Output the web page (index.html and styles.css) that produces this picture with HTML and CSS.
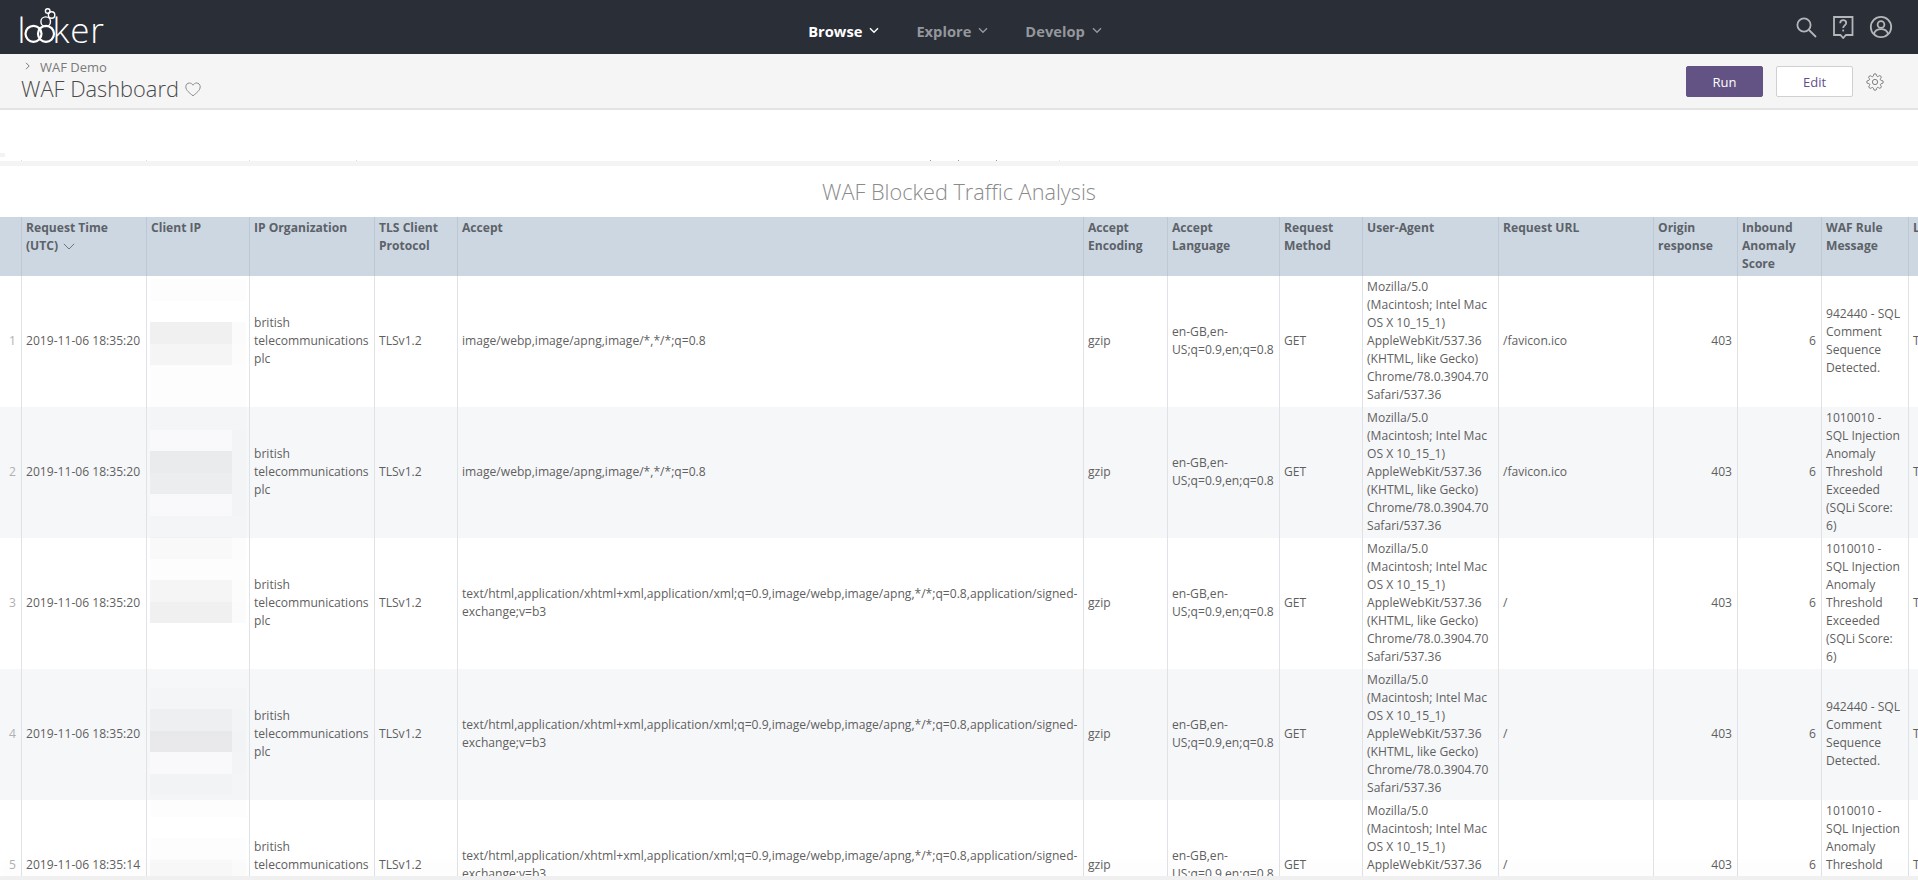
FILE: index.html
```html
<!DOCTYPE html>
<html lang="en">
<head>
<meta charset="utf-8">
<title>WAF Dashboard</title>
<link rel="stylesheet" href="styles.css">
</head>
<body>
<header class="topnav">
  <div class="logo">
    <svg width="100" height="54" viewBox="0 0 100 54" class="logo-svg">
      <text class="logo-text" x="-3.500" y="43">l</text>
      <circle class="logo-ring" cx="12.500" cy="33.800" r="8"/>
      <circle class="logo-ring" cx="25" cy="33.800" r="8"/>
      <text class="logo-text spaced" x="31.500" y="43">ker</text>
      <circle class="logo-ring thin" cx="24.700" cy="21.700" r="4.800"/>
      <circle class="logo-ring thin" cx="30.600" cy="15" r="3.200"/>
      <circle class="logo-ring thin" cx="26.700" cy="11" r="2.300"/>
    </svg>
  </div>
  <nav class="menu">
    <a class="menu-item active">Browse <svg class="chev" width="10" height="7" viewBox="0 0 10 7"><path d="M1 1.2l4 4 4-4"/></svg></a>
    <a class="menu-item">Explore <svg class="chev" width="10" height="7" viewBox="0 0 10 7"><path d="M1 1.2l4 4 4-4"/></svg></a>
    <a class="menu-item">Develop <svg class="chev" width="10" height="7" viewBox="0 0 10 7"><path d="M1 1.2l4 4 4-4"/></svg></a>
  </nav>
  <div class="tools">
    <svg class="tool" width="22" height="22" viewBox="0 0 22 22"><circle cx="9" cy="9" r="6.600"/><path d="M14 14l7 7"/></svg>
    <svg class="tool" width="22" height="24" viewBox="0 0 22 24"><path d="M2 2h18.500v18h-6.500l-2.800 3-2.800-3H2z"/><path d="M8.200 8.200c0-2 1.300-3 3-3s3 1.100 3 2.800c0 2.400-3 2.400-3 4.900"/><path d="M11.200 14.600v1.800"/></svg>
    <svg class="tool" width="24" height="24" viewBox="0 0 24 24"><circle cx="12" cy="12" r="10.200"/><circle cx="12" cy="9.500" r="3.400"/><path d="M5 19c1-3.500 3.500-4.800 7-4.800s6 1.300 7 4.800"/></svg>
  </div>
</header>

<section class="subhead">
  <div class="subhead-left">
    <div class="crumb"><svg class="crumb-chev" width="6" height="8" viewBox="0 0 6 8"><path d="M1 .8l3.200 3.200-3.200 3.200"/></svg><span>WAF Demo</span></div>
    <div class="page-title"><h1>WAF Dashboard</h1><svg class="heart" width="16" height="15" viewBox="0 0 16 15"><path d="M8 13.800C4.500 10.900.8 8.300.8 4.800.8 2.600 2.500 1 4.400 1 5.900 1 7.200 1.800 8 3.200 8.800 1.800 10.100 1 11.600 1c1.900 0 3.600 1.600 3.600 3.800 0 3.500-3.700 6.100-7.200 9z"/></svg></div>
  </div>
  <div class="subhead-right">
    <button class="btn btn-run">Run</button>
    <button class="btn btn-edit">Edit</button>
    <svg class="gear" width="18" height="18" viewBox="0 0 24 24"><circle cx="12" cy="12" r="3.500"/><path d="M19.400 15a1.650 1.650 0 0 0 .33 1.820l.06.06a2 2 0 0 1-2.830 2.830l-.06-.06a1.650 1.650 0 0 0-2.800 1.170V21a2 2 0 0 1-4 0v-.09a1.650 1.650 0 0 0-2.810-1.170l-.06.06a2 2 0 0 1-2.830-2.830l.06-.06A1.650 1.650 0 0 0 3.090 14H3a2 2 0 0 1 0-4h.09a1.650 1.650 0 0 0 1.170-2.810l-.06-.06a2 2 0 0 1 2.830-2.830l.06.06A1.650 1.650 0 0 0 10 3.090V3a2 2 0 0 1 4 0v.09a1.650 1.650 0 0 0 2.800 1.170l.06-.06a2 2 0 0 1 2.830 2.830l-.06.06A1.650 1.650 0 0 0 20.910 10H21a2 2 0 0 1 0 4h-.09a1.650 1.650 0 0 0-1.510 1z"/></svg>
  </div>
</section>

<div class="spacer"></div>
<div class="strip"></div>

<main class="tile">
  <h2 class="tile-title">WAF Blocked Traffic Analysis</h2>
  <div class="table-wrap">
    <table class="grid">
      <colgroup>
        <col class="c-num"><col class="c-time"><col class="c-ip"><col class="c-org"><col class="c-tls"><col class="c-accept"><col class="c-enc"><col class="c-lang"><col class="c-method"><col class="c-ua"><col class="c-url"><col class="c-origin"><col class="c-score"><col class="c-rule"><col class="c-last">
      </colgroup>
      <thead>
        <tr>
          <th></th>
          <th>Request Time (UTC) <svg class="sort" width="12" height="7" viewBox="0 0 12 7"><path d="M.8.8L6 6l5.200-5.200"/></svg></th>
          <th>Client IP</th>
          <th>IP Organization</th>
          <th>TLS Client Protocol</th>
          <th>Accept</th>
          <th>Accept Encoding</th>
          <th>Accept Language</th>
          <th>Request Method</th>
          <th>User-Agent</th>
          <th>Request URL</th>
          <th>Origin response</th>
          <th>Inbound Anomaly Score</th>
          <th>WAF Rule Message</th>
          <th>L</th>
        </tr>
      </thead>
      <tbody>
        <tr>
          <td class="num">1</td><td>2019-11-06 18:35:20</td><td></td><td>british telecommunications plc</td><td>TLSv1.2</td>
          <td>image/webp,image/apng,image/*,*/*;q=0.8</td><td>gzip</td><td>en-GB,en-US;q=0.9,en;q=0.8</td><td>GET</td>
          <td>Mozilla/5.0 (Macintosh; Intel Mac OS X 10_15_1) AppleWebKit/537.36 (KHTML, like Gecko) Chrome/78.0.3904.70 Safari/537.36</td>
          <td>/favicon.ico</td><td class="right">403</td><td class="right">6</td><td>942440 - SQL Comment Sequence Detected.</td><td>T</td>
        </tr>
        <tr>
          <td class="num">2</td><td>2019-11-06 18:35:20</td><td></td><td>british telecommunications plc</td><td>TLSv1.2</td>
          <td>image/webp,image/apng,image/*,*/*;q=0.8</td><td>gzip</td><td>en-GB,en-US;q=0.9,en;q=0.8</td><td>GET</td>
          <td>Mozilla/5.0 (Macintosh; Intel Mac OS X 10_15_1) AppleWebKit/537.36 (KHTML, like Gecko) Chrome/78.0.3904.70 Safari/537.36</td>
          <td>/favicon.ico</td><td class="right">403</td><td class="right">6</td><td>1010010 - SQL Injection Anomaly Threshold Exceeded (SQLi Score: 6)</td><td>T</td>
        </tr>
        <tr>
          <td class="num">3</td><td>2019-11-06 18:35:20</td><td></td><td>british telecommunications plc</td><td>TLSv1.2</td>
          <td>text/html,application/xhtml+xml,application/xml;q=0.9,image/webp,image/apng,*/*;q=0.8,application/signed-exchange;v=b3</td><td>gzip</td><td>en-GB,en-US;q=0.9,en;q=0.8</td><td>GET</td>
          <td>Mozilla/5.0 (Macintosh; Intel Mac OS X 10_15_1) AppleWebKit/537.36 (KHTML, like Gecko) Chrome/78.0.3904.70 Safari/537.36</td>
          <td>/</td><td class="right">403</td><td class="right">6</td><td>1010010 - SQL Injection Anomaly Threshold Exceeded (SQLi Score: 6)</td><td>T</td>
        </tr>
        <tr>
          <td class="num">4</td><td>2019-11-06 18:35:20</td><td></td><td>british telecommunications plc</td><td>TLSv1.2</td>
          <td>text/html,application/xhtml+xml,application/xml;q=0.9,image/webp,image/apng,*/*;q=0.8,application/signed-exchange;v=b3</td><td>gzip</td><td>en-GB,en-US;q=0.9,en;q=0.8</td><td>GET</td>
          <td>Mozilla/5.0 (Macintosh; Intel Mac OS X 10_15_1) AppleWebKit/537.36 (KHTML, like Gecko) Chrome/78.0.3904.70 Safari/537.36</td>
          <td>/</td><td class="right">403</td><td class="right">6</td><td>942440 - SQL Comment Sequence Detected.</td><td>T</td>
        </tr>
        <tr>
          <td class="num">5</td><td>2019-11-06 18:35:14</td><td></td><td>british telecommunications plc</td><td>TLSv1.2</td>
          <td>text/html,application/xhtml+xml,application/xml;q=0.9,image/webp,image/apng,*/*;q=0.8,application/signed-exchange;v=b3</td><td>gzip</td><td>en-GB,en-US;q=0.9,en;q=0.8</td><td>GET</td>
          <td>Mozilla/5.0 (Macintosh; Intel Mac OS X 10_15_1) AppleWebKit/537.36 (KHTML, like Gecko) Chrome/78.0.3904.70 Safari/537.36</td>
          <td>/</td><td class="right">403</td><td class="right">6</td><td>1010010 - SQL Injection Anomaly Threshold Exceeded (SQLi Score: 6)</td><td>T</td>
        </tr>
      </tbody>
    </table>
    <div class="ip-blur" aria-hidden="true">
      <div class="band a0"></div><div class="band"></div><div class="band a6"></div><div class="band a4"></div><div class="band a0"></div><div class="band a0"></div>
      <div class="band a0"></div><div class="band lt"></div><div class="band a5"></div><div class="band a4"></div><div class="band lt"></div><div class="band a0"></div>
      <div class="band a2"></div><div class="band a0"></div><div class="band a4"></div><div class="band a6"></div><div class="band"></div><div class="band"></div>
      <div class="band"></div><div class="band a0"></div><div class="band a3"></div><div class="band a6"></div><div class="band lt"></div><div class="band a1"></div>
      <div class="band a0"></div><div class="band"></div><div class="band a0"></div><div class="band a2"></div><div class="band a10"></div>
    </div>
  </div>
</main>
<div class="bottom-edge"></div>
</body>
</html>
```
FILE: styles.css
```css
* { box-sizing: border-box; }
html, body { margin: 0; height: 880px; overflow: hidden; }
body {
  display: flex;
  flex-direction: column;
  background: #fff;
  font-family: "Open Sans", "Liberation Sans", sans-serif;
  color: #5a5a5a;
}

/* top nav */
.topnav {
  flex: 0 0 54px;
  display: grid;
  grid-template-columns: 1fr auto 1fr;
  align-items: center;
  background: #2a2e37;
  padding: 0 25px 0 21px;
}
.logo { height: 54px; }
.logo-svg { display: block; overflow: visible; }
.logo-text { font-family: "Open Sans", sans-serif; font-weight: 300; font-size: 35px; fill: #fff; }
.logo-text.spaced { letter-spacing: .8px; }
.logo-ring { fill: none; stroke: #fff; stroke-width: 2.2; }
.logo-ring.thin { stroke-width: 1.4; }
.menu { display: flex; gap: 37px; padding: 7px 4px 0 0; }
.menu-item {
  display: flex;
  align-items: center;
  gap: 7px;
  font-size: 14.700px;
  font-weight: 700;
  color: #94979c;
}
.menu-item.active { color: #fff; }
.chev { fill: none; stroke: #94979c; stroke-width: 1.4; }
.menu-item.active .chev { stroke: #fff; }
.tools { display: flex; justify-content: flex-end; align-items: center; gap: 15px; }
.tool { fill: none; stroke: #b4b6b9; stroke-width: 1.8; }

/* sub header */
.subhead {
  flex: 0 0 56px;
  display: flex;
  justify-content: space-between;
  align-items: flex-start;
  background: #f5f5f5;
  border-bottom: 2px solid #e3e3e3;
  padding: 0 34px 0 21px;
}
.subhead-left { display: flex; flex-direction: column; }
.crumb {
  display: flex;
  align-items: center;
  gap: 9px;
  height: 23px;
  padding: 2px 0 0 4px;
  font-size: 13px;
  color: #7a7a7a;
}
.crumb-chev { fill: none; stroke: #7a7a7a; stroke-width: 1; margin-top: -2px; }
.page-title { display: flex; align-items: center; gap: 6px; height: 24px; }
.page-title h1 { margin: 0; font-size: 21.800px; font-weight: 300; color: #4a4a4a; line-height: 24px; }
.heart { fill: none; stroke: #8a8a8a; stroke-width: 1; }
.subhead-right { display: flex; align-items: center; gap: 13px; padding-top: 12px; }
.btn {
  width: 77px;
  height: 31px;
  border-radius: 2px;
  font-family: inherit;
  font-size: 13px;
  padding: 0;
}
.btn-run { background: #635385; border: 1px solid #635385; color: #fff; }
.btn-edit { background: #fff; border: 1px solid #d0d0d0; color: #5f4f8d; }
.gear { fill: none; stroke: #666; stroke-width: 1.1; }

/* clipped row above the tile */
.spacer {
  flex: 0 0 51px;
  background-color: #fff;
  background-image:
    linear-gradient(#f3f3f3, #f3f3f3),
    linear-gradient(#ddd, #ddd), linear-gradient(#ddd, #ddd), linear-gradient(#ddd, #ddd), linear-gradient(#ddd, #ddd),
    linear-gradient(#999, #999), linear-gradient(#999, #999), linear-gradient(#999, #999), linear-gradient(#e2e2e2, #e2e2e2);
  background-size: 5px 4px, 1px 1px, 1px 1px, 1px 1px, 1px 1px, 1px 1px, 1px 1px, 1px 1px, 1px 1px;
  background-repeat: no-repeat;
  background-position:
    0 43px,
    21px 50px, 146px 50px, 249px 50px, 356px 50px,
    930px 50px, 958px 50px, 996px 50px, 1059px 50px;
}
.strip { flex: 0 0 5px; background: #f4f4f4; }

/* tile */
.tile { flex: 1 1 0; min-height: 0; overflow: hidden; background: #fff; }
.tile-title {
  margin: 0;
  height: 51px;
  line-height: 52px;
  text-align: center;
  font-size: 21.700px;
  font-weight: 300;
  color: #8a8a8a;
}
.table-wrap { position: relative; }
.grid {
  table-layout: fixed;
  border-collapse: separate;
  border-spacing: 0;
  width: 1960px;
  font-size: 12.100px;
  line-height: 18px;
}
.c-num { width: 21px; }
.c-time { width: 125px; }
.c-ip { width: 103px; }
.c-org { width: 125px; }
.c-tls { width: 83px; }
.c-accept { width: 626px; }
.c-enc { width: 84px; }
.c-lang { width: 112px; }
.c-method { width: 83px; }
.c-ua { width: 136px; }
.c-url { width: 155px; }
.c-origin { width: 84px; }
.c-score { width: 84px; }
.c-rule { width: 87px; }
.c-last { width: 52px; }
.grid th {
  height: 59px;
  padding: 2px 10px 0 4px;
  background: #cdd7e2;
  border-left: 1px solid #bdc8d4;
  text-align: left;
  vertical-align: top;
  font-weight: 700;
  color: #5c6268;
}
.grid th:first-child { border-left: 0; }
.grid td {
  height: 131px;
  padding: 0 4px 1px 4px;
  border-left: 1px solid #dfe2e6;
  vertical-align: middle;
  color: #5f5f5f;
  word-wrap: break-word;
}
.grid tbody tr:nth-child(even) td { background: #f6f7f9; }
.grid td.num { border-left: 0; padding: 0 5px 1px 0; text-align: right; color: #b0b0b0; }
.grid td.right { padding-right: 5px; text-align: right; }
.sort { fill: none; stroke: #6d7680; stroke-width: 1; margin-left: 2px; }

/* obscured Client IP column */
.ip-blur {
  position: absolute;
  left: 150px;
  top: 62px;
  width: 96px;
  display: flex;
  flex-direction: column;
  pointer-events: none;
}
.band {
  flex: 0 0 21.500px;
  --c: transparent;
  --r: transparent;
  background: linear-gradient(to right, var(--c) 82px, var(--r) 82px);
}
.a0 { --c: rgba(0, 0, 0, .006); --r: rgba(0, 0, 0, .006); }
.a1 { --c: rgba(0, 0, 0, .015); --r: rgba(0, 0, 0, .006); }
.a2 { --c: rgba(0, 0, 0, .025); --r: rgba(0, 0, 0, .01); }
.a3 { --c: rgba(0, 0, 0, .032); --r: rgba(0, 0, 0, .01); }
.a4 { --c: rgba(0, 0, 0, .04); --r: rgba(0, 0, 0, .012); }
.a5 { --c: rgba(0, 0, 0, .05); --r: rgba(0, 0, 0, .012); }
.a6 { --c: rgba(0, 0, 0, .06); --r: rgba(0, 0, 0, .014); }
.a10 { --c: rgba(0, 0, 0, .1); --r: rgba(0, 0, 0, .03); }
.lt { --c: rgba(255, 255, 255, .3); --r: rgba(0, 0, 0, .012); }

.bottom-edge {
  flex: 0 0 4px;
  position: relative;
  background: #f0f0f0;
  box-shadow: 0 -8px 14px rgba(0, 0, 0, .05);
}
```
